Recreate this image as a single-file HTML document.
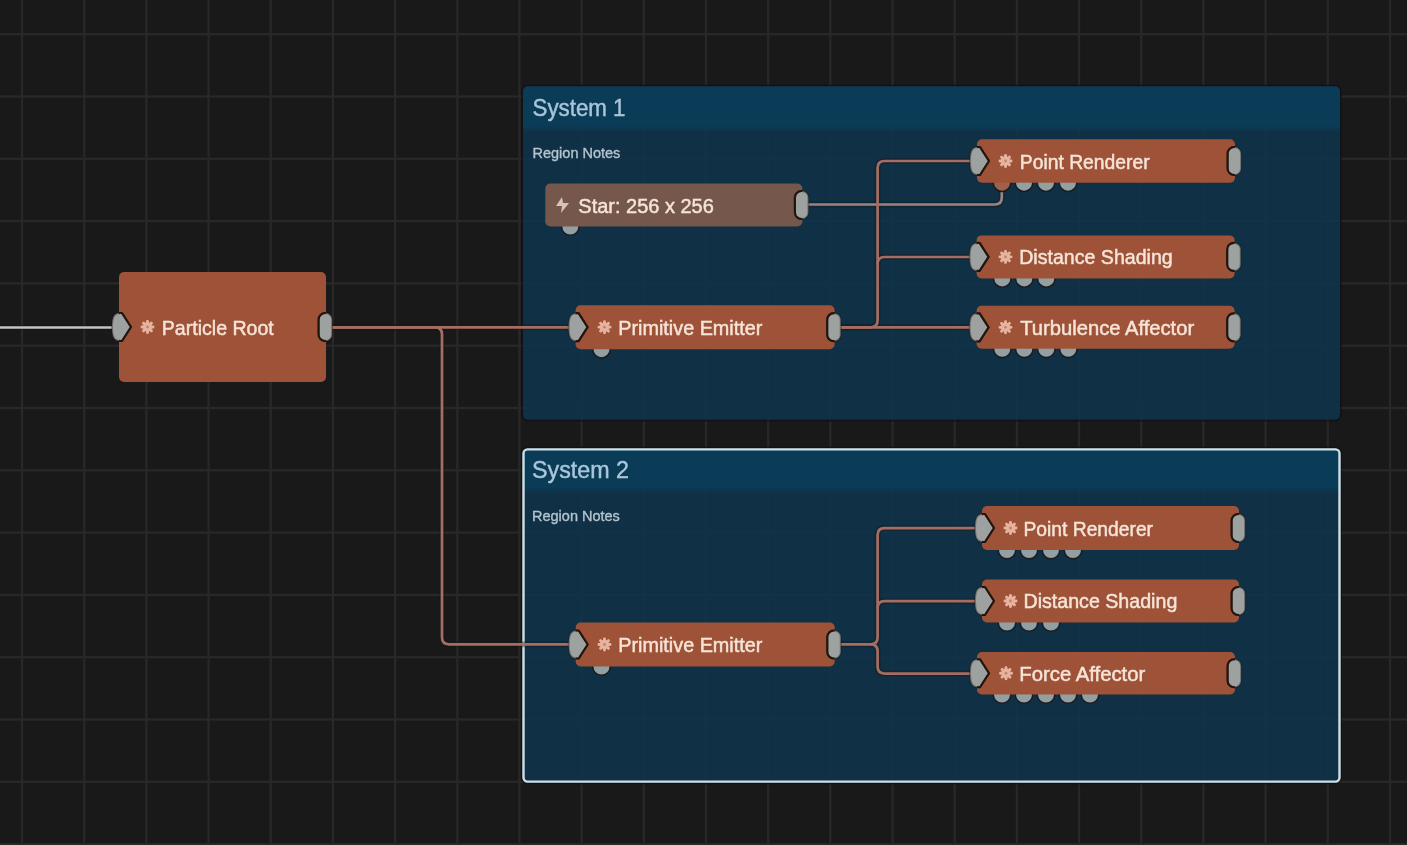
<!DOCTYPE html>
<html><head><meta charset="utf-8"><style>
html,body{margin:0;padding:0;background:#191919;width:1407px;height:845px;overflow:hidden}
svg{display:block;filter:blur(0.5px)}
text{font-family:"Liberation Sans",sans-serif}
</style></head><body>
<svg width="1407" height="845" viewBox="0 0 1407 845">
<defs>
<symbol id="gear" viewBox="-8 -8 16 16">
<g fill="#e6b49e">
<circle r="5"/>
<g id="teeth">
<rect x="-1.5" y="-7.4" width="3" height="4" rx="1.2"/>
<rect x="-1.5" y="3.4" width="3" height="4" rx="1.2"/>
<rect x="-7.4" y="-1.5" width="4" height="3" rx="1.2"/>
<rect x="3.4" y="-1.5" width="4" height="3" rx="1.2"/>
</g>
<use href="#teeth" transform="rotate(45)"/>
</g>
<circle r="1.5" fill="#9e5338" fill-opacity="0.5"/>
</symbol>
</defs>
<rect width="1407" height="845" fill="#191919"/>

<g fill="#282828"><rect x="20.85" y="0" width="2.3" height="845"/><rect x="83.03" y="0" width="2.3" height="845"/><rect x="145.21" y="0" width="2.3" height="845"/><rect x="207.39" y="0" width="2.3" height="845"/><rect x="269.57" y="0" width="2.3" height="845"/><rect x="331.75" y="0" width="2.3" height="845"/><rect x="393.93" y="0" width="2.3" height="845"/><rect x="456.11" y="0" width="2.3" height="845"/><rect x="518.29" y="0" width="2.3" height="845"/><rect x="580.47" y="0" width="2.3" height="845"/><rect x="642.65" y="0" width="2.3" height="845"/><rect x="704.83" y="0" width="2.3" height="845"/><rect x="767.01" y="0" width="2.3" height="845"/><rect x="829.19" y="0" width="2.3" height="845"/><rect x="891.37" y="0" width="2.3" height="845"/><rect x="953.55" y="0" width="2.3" height="845"/><rect x="1015.73" y="0" width="2.3" height="845"/><rect x="1077.91" y="0" width="2.3" height="845"/><rect x="1140.09" y="0" width="2.3" height="845"/><rect x="1202.27" y="0" width="2.3" height="845"/><rect x="1264.45" y="0" width="2.3" height="845"/><rect x="1326.63" y="0" width="2.3" height="845"/><rect x="1388.81" y="0" width="2.3" height="845"/><rect x="0" y="33.05" width="1407" height="2.3"/><rect x="0" y="95.35" width="1407" height="2.3"/><rect x="0" y="157.65" width="1407" height="2.3"/><rect x="0" y="219.95" width="1407" height="2.3"/><rect x="0" y="282.25" width="1407" height="2.3"/><rect x="0" y="344.55" width="1407" height="2.3"/><rect x="0" y="406.85" width="1407" height="2.3"/><rect x="0" y="469.15" width="1407" height="2.3"/><rect x="0" y="531.45" width="1407" height="2.3"/><rect x="0" y="593.75" width="1407" height="2.3"/><rect x="0" y="656.05" width="1407" height="2.3"/><rect x="0" y="718.35" width="1407" height="2.3"/><rect x="0" y="780.65" width="1407" height="2.3"/><rect x="0" y="842.95" width="1407" height="2.3"/></g>
<g>
<rect x="522.2" y="85.5" width="818.6" height="335.1" rx="6" fill="none" stroke="#0c1214" stroke-width="1.6" stroke-opacity="0.8"/>
<clipPath id="c86"><rect x="523" y="86.3" width="817" height="333.5" rx="5"/></clipPath>
<g clip-path="url(#c86)">
<rect x="523" y="86.3" width="817" height="333.5" fill="#0e334b" fill-opacity="0.88"/>
<linearGradient id="hg86" x1="0" y1="0" x2="0" y2="1"><stop offset="0" stop-color="#0b3c57"/><stop offset="0.828" stop-color="#0b3c57"/><stop offset="1" stop-color="#0b3c57" stop-opacity="0"/></linearGradient>
<rect x="523" y="86.3" width="817" height="46.5" fill="url(#hg86)"/>
</g>
<text transform="translate(532.5 115.5) scale(1 1.09)" font-size="22" fill="#a9c6da" stroke="#a9c6da" stroke-width="0.4" textLength="93" lengthAdjust="spacingAndGlyphs">System 1</text>
<text x="532.5" y="158.3" font-size="14.5" fill="#b4c4d0" stroke="#b4c4d0" stroke-width="0.35">Region Notes</text>
</g>
<g>
<rect x="521.7" y="447.59999999999997" width="819.6" height="335.8" rx="6" fill="none" stroke="#0c1214" stroke-width="1.6" stroke-opacity="0.8"/>
<clipPath id="c448"><rect x="522.5" y="448.4" width="818" height="334.2" rx="5"/></clipPath>
<g clip-path="url(#c448)">
<rect x="522.5" y="448.4" width="818" height="334.2" fill="#0e334b" fill-opacity="0.88"/>
<linearGradient id="hg448" x1="0" y1="0" x2="0" y2="1"><stop offset="0" stop-color="#0b3c57"/><stop offset="0.826" stop-color="#0b3c57"/><stop offset="1" stop-color="#0b3c57" stop-opacity="0"/></linearGradient>
<rect x="522.5" y="448.4" width="818" height="46" fill="url(#hg448)"/>
</g>
<rect x="523.5" y="449.4" width="816" height="332.2" rx="4" fill="none" stroke="#cfdfe6" stroke-width="2.4"/>
<text transform="translate(532.0 477.9) scale(1 1.09)" font-size="22" fill="#a9c6da" stroke="#a9c6da" stroke-width="0.4" textLength="97" lengthAdjust="spacingAndGlyphs">System 2</text>
<text x="532.0" y="520.8" font-size="14.5" fill="#b4c4d0" stroke="#b4c4d0" stroke-width="0.35">Region Notes</text>
</g>
<path d="M0 327.4 H115" stroke="#111" stroke-opacity="0.5" stroke-width="5" fill="none"/>
<path d="M0 327.4 H115" stroke="#c4c4c4" stroke-width="2.5" fill="none"/>
<path d="M803 204.5 H994.8 Q1001.8 204.5 1001.8 197.5 V186" fill="none" stroke="#161616" stroke-opacity="0.35" stroke-width="6" stroke-linejoin="round"/>
<path d="M326 327.3 H578" fill="none" stroke="#161616" stroke-opacity="0.35" stroke-width="6" stroke-linejoin="round"/>
<path d="M326 327.3 H435 Q442 327.3 442 334.3 V637.3 Q442 644.3 449 644.3 H578" fill="none" stroke="#161616" stroke-opacity="0.35" stroke-width="6" stroke-linejoin="round"/>
<path d="M834 327.3 H870.6 Q877.6 327.3 877.6 320.3 V168 Q877.6 161 884.6 161 H980" fill="none" stroke="#161616" stroke-opacity="0.35" stroke-width="6" stroke-linejoin="round"/>
<path d="M877.6 264 Q877.6 257 884.6 257 H980" fill="none" stroke="#161616" stroke-opacity="0.35" stroke-width="6" stroke-linejoin="round"/>
<path d="M834 327.3 H980" fill="none" stroke="#161616" stroke-opacity="0.35" stroke-width="6" stroke-linejoin="round"/>
<path d="M834 644.3 H870.6 Q877.6 644.3 877.6 637.3 V535.1 Q877.6 528.1 884.6 528.1 H980" fill="none" stroke="#161616" stroke-opacity="0.35" stroke-width="6" stroke-linejoin="round"/>
<path d="M877.6 608.2 Q877.6 601.2 884.6 601.2 H980" fill="none" stroke="#161616" stroke-opacity="0.35" stroke-width="6" stroke-linejoin="round"/>
<path d="M870.6 644.3 Q877.6 644.3 877.6 651.3 V666.6 Q877.6 673.6 884.6 673.6 H975" fill="none" stroke="#161616" stroke-opacity="0.35" stroke-width="6" stroke-linejoin="round"/>
<path d="M803 204.5 H994.8 Q1001.8 204.5 1001.8 197.5 V186" fill="none" stroke="#9a8480" stroke-width="2.7" stroke-linejoin="round"/>
<path d="M326 327.3 H578" fill="none" stroke="#a66e62" stroke-width="2.7" stroke-linejoin="round"/>
<path d="M326 327.3 H435 Q442 327.3 442 334.3 V637.3 Q442 644.3 449 644.3 H578" fill="none" stroke="#a66e62" stroke-width="2.7" stroke-linejoin="round"/>
<path d="M834 327.3 H870.6 Q877.6 327.3 877.6 320.3 V168 Q877.6 161 884.6 161 H980" fill="none" stroke="#a66e62" stroke-width="2.7" stroke-linejoin="round"/>
<path d="M877.6 264 Q877.6 257 884.6 257 H980" fill="none" stroke="#a66e62" stroke-width="2.7" stroke-linejoin="round"/>
<path d="M834 327.3 H980" fill="none" stroke="#a66e62" stroke-width="2.7" stroke-linejoin="round"/>
<path d="M834 644.3 H870.6 Q877.6 644.3 877.6 637.3 V535.1 Q877.6 528.1 884.6 528.1 H980" fill="none" stroke="#a66e62" stroke-width="2.7" stroke-linejoin="round"/>
<path d="M877.6 608.2 Q877.6 601.2 884.6 601.2 H980" fill="none" stroke="#a66e62" stroke-width="2.7" stroke-linejoin="round"/>
<path d="M870.6 644.3 Q877.6 644.3 877.6 651.3 V666.6 Q877.6 673.6 884.6 673.6 H975" fill="none" stroke="#a66e62" stroke-width="2.7" stroke-linejoin="round"/>
<rect x="119" y="272" width="207" height="110" rx="5" fill="#9e5338"/>
<clipPath id="n1"><rect x="119" y="272" width="207" height="110"/></clipPath>
<path d="M120 313.0 L122 313.0 L131 327.0 L122 341.0 L120 341.0 C113 341.0 112 335.0 112 327.0 C112 319.0 113 313.0 120 313.0 Z" fill="#9da1a0" stroke="#22150f" stroke-opacity="0.35" stroke-width="2" stroke-linejoin="round"/>
<path d="M120 313.0 L122 313.0 L131 327.0 L122 341.0 L120 341.0 C113 341.0 112 335.0 112 327.0 C112 319.0 113 313.0 120 313.0 Z" fill="none" stroke="#22150f" stroke-width="2.2" stroke-linejoin="round" clip-path="url(#n1)"/>
<rect x="318.6" y="313.0" width="13.5" height="28" rx="6.5" fill="#9da1a0" stroke="#22150f" stroke-opacity="0.35" stroke-width="2"/>
<rect x="318.6" y="313.0" width="13.5" height="28" rx="6.5" fill="none" stroke="#22150f" stroke-width="2.2" clip-path="url(#n1)"/>
<use href="#gear" x="140" y="319.5" width="15" height="15"/>
<text transform="translate(161.8 334.8) scale(1 1.05)" font-size="20" fill="#f6e4d8" stroke="#f6e4d8" stroke-width="0.45" textLength="112" lengthAdjust="spacingAndGlyphs">Particle Root</text>
<circle cx="570.3" cy="226.5" r="8.8" fill="#92a0a3" stroke="#1b1c20" stroke-width="1.6"/>
<rect x="545.3" y="183.5" width="257" height="43" rx="5" fill="#76574b"/>
<clipPath id="n2"><rect x="545.3" y="183.5" width="257" height="43"/></clipPath>
<rect x="794.9" y="191.0" width="13.5" height="28" rx="6.5" fill="#9da1a0" stroke="#22150f" stroke-opacity="0.35" stroke-width="2"/>
<rect x="794.9" y="191.0" width="13.5" height="28" rx="6.5" fill="none" stroke="#22150f" stroke-width="2.2" clip-path="url(#n2)"/>
<path d="M562 197.0 L556 206.0 L562 206.0 L561 213.0 L569 203.0 L563 203.0 Z" fill="#d8c2ba"/>
<text transform="translate(578.3 212.5) scale(1 1.05)" font-size="19" fill="#f6e4d8" stroke="#f6e4d8" stroke-width="0.45" textLength="135.5" lengthAdjust="spacingAndGlyphs">Star: 256 x 256</text>
<circle cx="601.5" cy="349.2" r="8.8" fill="#92a0a3" stroke="#1b1c20" stroke-width="1.6"/>
<rect x="575.6" y="305.2" width="259" height="44" rx="5" fill="#9e5338"/>
<clipPath id="n3"><rect x="575.6" y="305.2" width="259" height="44"/></clipPath>
<path d="M576.6 313.2 L578.6 313.2 L587.6 327.2 L578.6 341.2 L576.6 341.2 C569.6 341.2 568.6 335.2 568.6 327.2 C568.6 319.2 569.6 313.2 576.6 313.2 Z" fill="#9da1a0" stroke="#22150f" stroke-opacity="0.35" stroke-width="2" stroke-linejoin="round"/>
<path d="M576.6 313.2 L578.6 313.2 L587.6 327.2 L578.6 341.2 L576.6 341.2 C569.6 341.2 568.6 335.2 568.6 327.2 C568.6 319.2 569.6 313.2 576.6 313.2 Z" fill="none" stroke="#22150f" stroke-width="2.2" stroke-linejoin="round" clip-path="url(#n3)"/>
<rect x="827.2" y="313.2" width="13.5" height="28" rx="6.5" fill="#9da1a0" stroke="#22150f" stroke-opacity="0.35" stroke-width="2"/>
<rect x="827.2" y="313.2" width="13.5" height="28" rx="6.5" fill="none" stroke="#22150f" stroke-width="2.2" clip-path="url(#n3)"/>
<use href="#gear" x="597" y="319.7" width="15" height="15"/>
<text transform="translate(618.3 334.7) scale(1 1.05)" font-size="19" fill="#f6e4d8" stroke="#f6e4d8" stroke-width="0.45" textLength="144" lengthAdjust="spacingAndGlyphs">Primitive Emitter</text>
<circle cx="1002" cy="182.70000000000002" r="8.8" fill="#a0604a" stroke="#1b1c20" stroke-width="1.6"/>
<circle cx="1024" cy="182.70000000000002" r="8.8" fill="#92a0a3" stroke="#1b1c20" stroke-width="1.6"/>
<circle cx="1046" cy="182.70000000000002" r="8.8" fill="#92a0a3" stroke="#1b1c20" stroke-width="1.6"/>
<circle cx="1068" cy="182.70000000000002" r="8.8" fill="#92a0a3" stroke="#1b1c20" stroke-width="1.6"/>
<rect x="977" y="139.3" width="258" height="43.4" rx="5" fill="#9e5338"/>
<clipPath id="n4"><rect x="977" y="139.3" width="258" height="43.4"/></clipPath>
<path d="M978 147.0 L980 147.0 L989 161.0 L980 175.0 L978 175.0 C971 175.0 970 169.0 970 161.0 C970 153.0 971 147.0 978 147.0 Z" fill="#9da1a0" stroke="#22150f" stroke-opacity="0.35" stroke-width="2" stroke-linejoin="round"/>
<path d="M978 147.0 L980 147.0 L989 161.0 L980 175.0 L978 175.0 C971 175.0 970 169.0 970 161.0 C970 153.0 971 147.0 978 147.0 Z" fill="none" stroke="#22150f" stroke-width="2.2" stroke-linejoin="round" clip-path="url(#n4)"/>
<rect x="1227.6" y="147.0" width="13.5" height="28" rx="6.5" fill="#9da1a0" stroke="#22150f" stroke-opacity="0.35" stroke-width="2"/>
<rect x="1227.6" y="147.0" width="13.5" height="28" rx="6.5" fill="none" stroke="#22150f" stroke-width="2.2" clip-path="url(#n4)"/>
<use href="#gear" x="998" y="153.5" width="15" height="15"/>
<text transform="translate(1019.8 168.8) scale(1 1.05)" font-size="19" fill="#f6e4d8" stroke="#f6e4d8" stroke-width="0.45" textLength="129.8" lengthAdjust="spacingAndGlyphs">Point Renderer</text>
<circle cx="1002.3" cy="278.4" r="8.8" fill="#92a0a3" stroke="#1b1c20" stroke-width="1.6"/>
<circle cx="1024.3" cy="278.4" r="8.8" fill="#92a0a3" stroke="#1b1c20" stroke-width="1.6"/>
<circle cx="1046.3" cy="278.4" r="8.8" fill="#92a0a3" stroke="#1b1c20" stroke-width="1.6"/>
<rect x="976.6" y="235.4" width="258" height="43" rx="5" fill="#9e5338"/>
<clipPath id="n5"><rect x="976.6" y="235.4" width="258" height="43"/></clipPath>
<path d="M977.6 242.89999999999998 L979.6 242.89999999999998 L988.6 256.9 L979.6 270.9 L977.6 270.9 C970.6 270.9 969.6 264.9 969.6 256.9 C969.6 248.89999999999998 970.6 242.89999999999998 977.6 242.89999999999998 Z" fill="#9da1a0" stroke="#22150f" stroke-opacity="0.35" stroke-width="2" stroke-linejoin="round"/>
<path d="M977.6 242.89999999999998 L979.6 242.89999999999998 L988.6 256.9 L979.6 270.9 L977.6 270.9 C970.6 270.9 969.6 264.9 969.6 256.9 C969.6 248.89999999999998 970.6 242.89999999999998 977.6 242.89999999999998 Z" fill="none" stroke="#22150f" stroke-width="2.2" stroke-linejoin="round" clip-path="url(#n5)"/>
<rect x="1227.1999999999998" y="242.89999999999998" width="13.5" height="28" rx="6.5" fill="#9da1a0" stroke="#22150f" stroke-opacity="0.35" stroke-width="2"/>
<rect x="1227.1999999999998" y="242.89999999999998" width="13.5" height="28" rx="6.5" fill="none" stroke="#22150f" stroke-width="2.2" clip-path="url(#n5)"/>
<use href="#gear" x="998" y="249.39999999999998" width="15" height="15"/>
<text transform="translate(1019.2 263.9) scale(1 1.05)" font-size="19" fill="#f6e4d8" stroke="#f6e4d8" stroke-width="0.45" textLength="153.5" lengthAdjust="spacingAndGlyphs">Distance Shading</text>
<circle cx="1002.3" cy="348.8" r="8.8" fill="#92a0a3" stroke="#1b1c20" stroke-width="1.6"/>
<circle cx="1024.3" cy="348.8" r="8.8" fill="#92a0a3" stroke="#1b1c20" stroke-width="1.6"/>
<circle cx="1046.3" cy="348.8" r="8.8" fill="#92a0a3" stroke="#1b1c20" stroke-width="1.6"/>
<circle cx="1068.3" cy="348.8" r="8.8" fill="#92a0a3" stroke="#1b1c20" stroke-width="1.6"/>
<rect x="976.6" y="305.8" width="258" height="43" rx="5" fill="#9e5338"/>
<clipPath id="n6"><rect x="976.6" y="305.8" width="258" height="43"/></clipPath>
<path d="M977.6 313.3 L979.6 313.3 L988.6 327.3 L979.6 341.3 L977.6 341.3 C970.6 341.3 969.6 335.3 969.6 327.3 C969.6 319.3 970.6 313.3 977.6 313.3 Z" fill="#9da1a0" stroke="#22150f" stroke-opacity="0.35" stroke-width="2" stroke-linejoin="round"/>
<path d="M977.6 313.3 L979.6 313.3 L988.6 327.3 L979.6 341.3 L977.6 341.3 C970.6 341.3 969.6 335.3 969.6 327.3 C969.6 319.3 970.6 313.3 977.6 313.3 Z" fill="none" stroke="#22150f" stroke-width="2.2" stroke-linejoin="round" clip-path="url(#n6)"/>
<rect x="1227.1999999999998" y="313.3" width="13.5" height="28" rx="6.5" fill="#9da1a0" stroke="#22150f" stroke-opacity="0.35" stroke-width="2"/>
<rect x="1227.1999999999998" y="313.3" width="13.5" height="28" rx="6.5" fill="none" stroke="#22150f" stroke-width="2.2" clip-path="url(#n6)"/>
<use href="#gear" x="998" y="319.8" width="15" height="15"/>
<text transform="translate(1020.3 334.7) scale(1 1.05)" font-size="19" fill="#f6e4d8" stroke="#f6e4d8" stroke-width="0.45" textLength="173.8" lengthAdjust="spacingAndGlyphs">Turbulence Affector</text>
<circle cx="601.5" cy="666.5" r="8.8" fill="#92a0a3" stroke="#1b1c20" stroke-width="1.6"/>
<rect x="575.7" y="622.5" width="259" height="44" rx="5" fill="#9e5338"/>
<clipPath id="n7"><rect x="575.7" y="622.5" width="259" height="44"/></clipPath>
<path d="M576.7 630.5 L578.7 630.5 L587.7 644.5 L578.7 658.5 L576.7 658.5 C569.7 658.5 568.7 652.5 568.7 644.5 C568.7 636.5 569.7 630.5 576.7 630.5 Z" fill="#9da1a0" stroke="#22150f" stroke-opacity="0.35" stroke-width="2" stroke-linejoin="round"/>
<path d="M576.7 630.5 L578.7 630.5 L587.7 644.5 L578.7 658.5 L576.7 658.5 C569.7 658.5 568.7 652.5 568.7 644.5 C568.7 636.5 569.7 630.5 576.7 630.5 Z" fill="none" stroke="#22150f" stroke-width="2.2" stroke-linejoin="round" clip-path="url(#n7)"/>
<rect x="827.3000000000001" y="630.5" width="13.5" height="28" rx="6.5" fill="#9da1a0" stroke="#22150f" stroke-opacity="0.35" stroke-width="2"/>
<rect x="827.3000000000001" y="630.5" width="13.5" height="28" rx="6.5" fill="none" stroke="#22150f" stroke-width="2.2" clip-path="url(#n7)"/>
<use href="#gear" x="597" y="637.0" width="15" height="15"/>
<text transform="translate(618.3 651.6) scale(1 1.05)" font-size="19" fill="#f6e4d8" stroke="#f6e4d8" stroke-width="0.45" textLength="144" lengthAdjust="spacingAndGlyphs">Primitive Emitter</text>
<circle cx="1007" cy="550" r="8.8" fill="#92a0a3" stroke="#1b1c20" stroke-width="1.6"/>
<circle cx="1029" cy="550" r="8.8" fill="#92a0a3" stroke="#1b1c20" stroke-width="1.6"/>
<circle cx="1051" cy="550" r="8.8" fill="#92a0a3" stroke="#1b1c20" stroke-width="1.6"/>
<circle cx="1073" cy="550" r="8.8" fill="#92a0a3" stroke="#1b1c20" stroke-width="1.6"/>
<rect x="982" y="506" width="257" height="44" rx="5" fill="#9e5338"/>
<clipPath id="n8"><rect x="982" y="506" width="257" height="44"/></clipPath>
<path d="M983 514.0 L985 514.0 L994 528.0 L985 542.0 L983 542.0 C976 542.0 975 536.0 975 528.0 C975 520.0 976 514.0 983 514.0 Z" fill="#9da1a0" stroke="#22150f" stroke-opacity="0.35" stroke-width="2" stroke-linejoin="round"/>
<path d="M983 514.0 L985 514.0 L994 528.0 L985 542.0 L983 542.0 C976 542.0 975 536.0 975 528.0 C975 520.0 976 514.0 983 514.0 Z" fill="none" stroke="#22150f" stroke-width="2.2" stroke-linejoin="round" clip-path="url(#n8)"/>
<rect x="1231.6" y="514.0" width="13.5" height="28" rx="6.5" fill="#9da1a0" stroke="#22150f" stroke-opacity="0.35" stroke-width="2"/>
<rect x="1231.6" y="514.0" width="13.5" height="28" rx="6.5" fill="none" stroke="#22150f" stroke-width="2.2" clip-path="url(#n8)"/>
<use href="#gear" x="1003" y="520.5" width="15" height="15"/>
<text transform="translate(1023.5 535.6) scale(1 1.05)" font-size="19" fill="#f6e4d8" stroke="#f6e4d8" stroke-width="0.45" textLength="129.5" lengthAdjust="spacingAndGlyphs">Point Renderer</text>
<circle cx="1007" cy="622.5" r="8.8" fill="#92a0a3" stroke="#1b1c20" stroke-width="1.6"/>
<circle cx="1029" cy="622.5" r="8.8" fill="#92a0a3" stroke="#1b1c20" stroke-width="1.6"/>
<circle cx="1051" cy="622.5" r="8.8" fill="#92a0a3" stroke="#1b1c20" stroke-width="1.6"/>
<rect x="982" y="579.5" width="257" height="43" rx="5" fill="#9e5338"/>
<clipPath id="n9"><rect x="982" y="579.5" width="257" height="43"/></clipPath>
<path d="M983 587.0 L985 587.0 L994 601.0 L985 615.0 L983 615.0 C976 615.0 975 609.0 975 601.0 C975 593.0 976 587.0 983 587.0 Z" fill="#9da1a0" stroke="#22150f" stroke-opacity="0.35" stroke-width="2" stroke-linejoin="round"/>
<path d="M983 587.0 L985 587.0 L994 601.0 L985 615.0 L983 615.0 C976 615.0 975 609.0 975 601.0 C975 593.0 976 587.0 983 587.0 Z" fill="none" stroke="#22150f" stroke-width="2.2" stroke-linejoin="round" clip-path="url(#n9)"/>
<rect x="1231.6" y="587.0" width="13.5" height="28" rx="6.5" fill="#9da1a0" stroke="#22150f" stroke-opacity="0.35" stroke-width="2"/>
<rect x="1231.6" y="587.0" width="13.5" height="28" rx="6.5" fill="none" stroke="#22150f" stroke-width="2.2" clip-path="url(#n9)"/>
<use href="#gear" x="1003" y="593.5" width="15" height="15"/>
<text transform="translate(1023.5 607.7) scale(1 1.05)" font-size="19" fill="#f6e4d8" stroke="#f6e4d8" stroke-width="0.45" textLength="153.8" lengthAdjust="spacingAndGlyphs">Distance Shading</text>
<circle cx="1002" cy="694.5" r="8.8" fill="#92a0a3" stroke="#1b1c20" stroke-width="1.6"/>
<circle cx="1024" cy="694.5" r="8.8" fill="#92a0a3" stroke="#1b1c20" stroke-width="1.6"/>
<circle cx="1046" cy="694.5" r="8.8" fill="#92a0a3" stroke="#1b1c20" stroke-width="1.6"/>
<circle cx="1068" cy="694.5" r="8.8" fill="#92a0a3" stroke="#1b1c20" stroke-width="1.6"/>
<circle cx="1090" cy="694.5" r="8.8" fill="#92a0a3" stroke="#1b1c20" stroke-width="1.6"/>
<rect x="977" y="652" width="258" height="42.5" rx="5" fill="#9e5338"/>
<clipPath id="n10"><rect x="977" y="652" width="258" height="42.5"/></clipPath>
<path d="M978 659.25 L980 659.25 L989 673.25 L980 687.25 L978 687.25 C971 687.25 970 681.25 970 673.25 C970 665.25 971 659.25 978 659.25 Z" fill="#9da1a0" stroke="#22150f" stroke-opacity="0.35" stroke-width="2" stroke-linejoin="round"/>
<path d="M978 659.25 L980 659.25 L989 673.25 L980 687.25 L978 687.25 C971 687.25 970 681.25 970 673.25 C970 665.25 971 659.25 978 659.25 Z" fill="none" stroke="#22150f" stroke-width="2.2" stroke-linejoin="round" clip-path="url(#n10)"/>
<rect x="1227.6" y="659.25" width="13.5" height="28" rx="6.5" fill="#9da1a0" stroke="#22150f" stroke-opacity="0.35" stroke-width="2"/>
<rect x="1227.6" y="659.25" width="13.5" height="28" rx="6.5" fill="none" stroke="#22150f" stroke-width="2.2" clip-path="url(#n10)"/>
<use href="#gear" x="998.5" y="665.75" width="15" height="15"/>
<text transform="translate(1019.3 680.6) scale(1 1.05)" font-size="19" fill="#f6e4d8" stroke="#f6e4d8" stroke-width="0.45" textLength="126" lengthAdjust="spacingAndGlyphs">Force Affector</text>
</svg></body></html>
